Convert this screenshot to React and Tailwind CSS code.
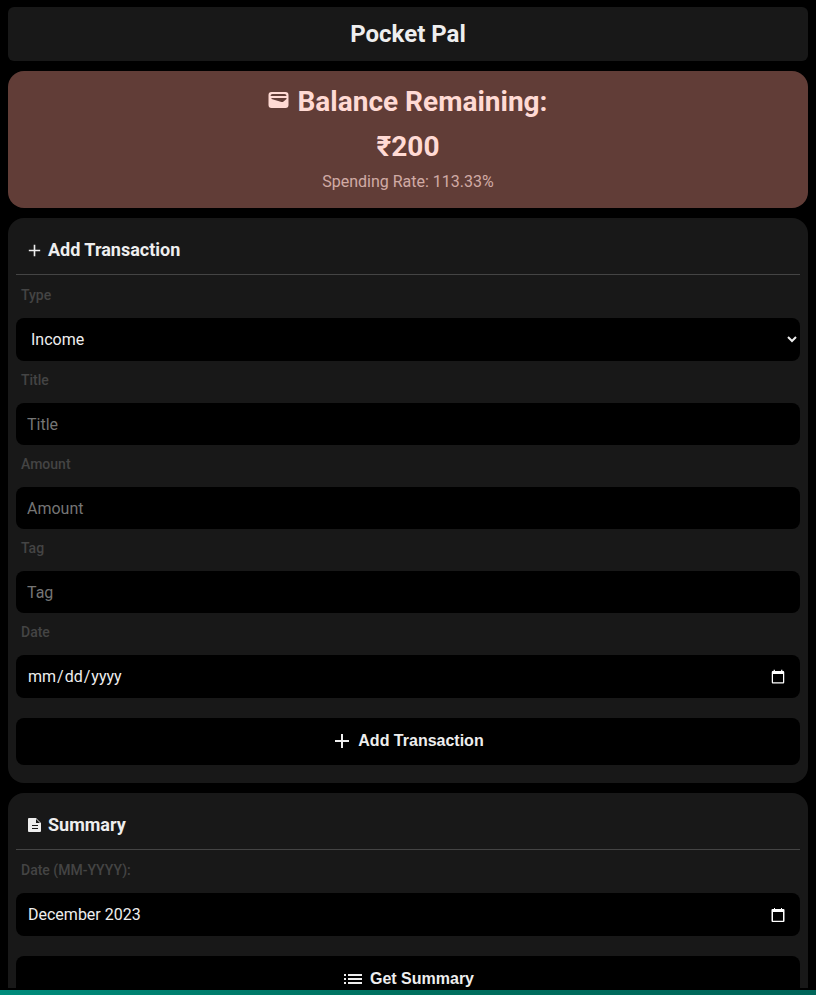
const fieldBase =
  "block w-full appearance-auto rounded-lg border-0 bg-black text-base text-[#eeeeee] outline-none";

function PlusIcon({ className }) {
  return (
    <svg className={className} viewBox="0 0 16 16" fill="none" stroke="currentColor" strokeWidth="2" aria-hidden="true">
      <path d="M8 1v14M1 8h14" />
    </svg>
  );
}

function WalletIcon({ className }) {
  return (
    <svg className={className} viewBox="0 0 20 16" fill="currentColor" aria-hidden="true">
      <path
        fillRule="evenodd"
        d="M3 0h14a3 3 0 0 1 3 3v10a3 3 0 0 1-3 3H3a3 3 0 0 1-3-3V3a3 3 0 0 1 3-3Zm1 2a2 2 0 0 0-2 2h16a2 2 0 0 0-2-2H4ZM3 6v1l10 3c.8.2 1.4.1 2-.4L18 7V6H3Z"
      />
    </svg>
  );
}

function DocumentIcon({ className }) {
  return (
    <svg className={className} viewBox="0 0 13 14" fill="currentColor" aria-hidden="true">
      <path fillRule="evenodd" d="M1 0h7l5 5v8a1 1 0 0 1-1 1H1a1 1 0 0 1-1-1V1a1 1 0 0 1 1-1Zm7 1v4h4L8 1ZM4 7v1h6V7H4Zm0 3v1h6v-1H4Z" />
    </svg>
  );
}

function ListIcon({ className }) {
  return (
    <svg className={className} viewBox="0 0 18 10" fill="currentColor" aria-hidden="true">
      <path d="M0 0h2v2H0zM4 0h14v2H4zM0 4h2v2H0zM4 4h14v2H4zM0 8h2v2H0zM4 8h14v2H4z" />
    </svg>
  );
}

function CalendarIcon({ className }) {
  return (
    <svg className={className} viewBox="0 0 14 14" fill="currentColor" aria-hidden="true">
      <path
        fillRule="evenodd"
        d="M3 0h1v1h6V0h1v1h1.5a1 1 0 0 1 1 1v11a1 1 0 0 1-1 1h-11a1 1 0 0 1-1-1V2a1 1 0 0 1 1-1H3V0ZM2 4v8.7h10V4H2Z"
      />
    </svg>
  );
}

function Card({ icon, title, children }) {
  return (
    <section className="rounded-2xl bg-[#181818] px-2 pb-[18px]">
      <h2 className="mb-px flex h-[57px] items-center gap-[7px] border-b border-[#444444] pt-2 pl-3 text-lg font-bold">
        {icon}
        {title}
      </h2>
      {children}
    </section>
  );
}

function Field({ id, label, children }) {
  return (
    <div>
      <label htmlFor={id} className="flex h-[42px] items-center pb-1 pl-[5px] text-sm font-medium text-[#444444]">
        {label}
      </label>
      {children}
    </div>
  );
}

function ActionButton({ icon, children }) {
  return (
    <button
      type="submit"
      className="mt-5 flex h-[47px] w-full items-center justify-center gap-2 rounded-lg bg-black pb-0.5 pl-0.5 font-['Liberation_Sans',Arial,sans-serif] text-base font-bold text-[#eeeeee]"
    >
      {icon}
      {children}
    </button>
  );
}

export default function App() {
  const stop = (event) => event.preventDefault();
  return (
    <div className="flex h-screen flex-col overflow-hidden bg-black font-[Roboto,sans-serif] text-[#eeeeee] scheme-dark">
      <div className="flex min-h-0 flex-1 flex-col overflow-hidden px-2 pt-[7px]">
        <main className="flex flex-col gap-[10px]">
          <header className="flex h-[54px] items-center justify-center rounded-md bg-[#181818]">
            <h1 className="text-2xl font-bold">Pocket Pal</h1>
          </header>

          <section className="rounded-2xl bg-[#613d37] px-2 pt-2 pb-3.5 text-center text-[#ffdad4]">
            <h2 className="text-[28px] leading-[45px] font-bold">
              <span className="flex items-center justify-center gap-2">
                <WalletIcon className="mb-1 h-4 w-[21px]" />
                Balance Remaining:
              </span>
              ₹200
            </h2>
            <p className="text-base leading-[25px] opacity-70">Spending Rate: 113.33%</p>
          </section>

          <Card icon={<PlusIcon className="size-[13px]" />} title="Add Transaction">
            <form onSubmit={stop}>
              <Field id="type" label="Type">
                <select id="type" className={`${fieldBase} h-[43px] px-[11px]`} defaultValue="Income">
                  <option>Income</option>
                  <option>Expense</option>
                </select>
              </Field>
              <Field id="title" label="Title">
                <input id="title" type="text" placeholder="Title" className={`${fieldBase} h-[42px] px-[11px] placeholder:text-[#757575]`} />
              </Field>
              <Field id="amount" label="Amount">
                <input id="amount" type="text" inputMode="decimal" placeholder="Amount" className={`${fieldBase} h-[42px] px-[11px] placeholder:text-[#757575]`} />
              </Field>
              <Field id="tag" label="Tag">
                <input id="tag" type="text" placeholder="Tag" className={`${fieldBase} h-[42px] px-[11px] placeholder:text-[#757575]`} />
              </Field>
              <Field id="date" label="Date">
                <input id="date" type="date" className={`${fieldBase} h-[43px] pr-3 pl-[11px]`} />
              </Field>
              <ActionButton icon={<PlusIcon className="size-4" />}>Add Transaction</ActionButton>
            </form>
          </Card>

          <Card icon={<DocumentIcon className="h-3.5 w-[13px]" />} title="Summary">
            <form onSubmit={stop}>
              <Field id="month" label="Date (MM-YYYY):">
                <div className="flex h-[43px] items-center rounded-lg bg-black pr-[15px] pl-3">
                  <input
                    id="month"
                    type="text"
                    defaultValue="December 2023"
                    className="min-w-0 flex-1 bg-transparent text-base text-[#eeeeee] outline-none"
                  />
                  <button type="button" aria-label="Choose month" className="text-white">
                    <CalendarIcon className="size-3.5" />
                  </button>
                </div>
              </Field>
              <ActionButton icon={<ListIcon className="h-2.5 w-[18px]" />}>Get Summary</ActionButton>
            </form>
          </Card>
        </main>
      </div>
      <div className="mt-0.5 h-[5px] shrink-0 bg-linear-to-r from-[#008c7c] via-[#00705f] to-[#00665a]" />
    </div>
  );
}
